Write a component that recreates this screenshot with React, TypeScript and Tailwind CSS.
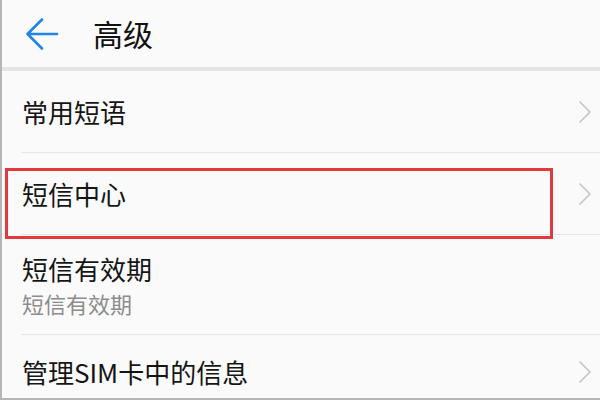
const font = { fontFamily: '"Noto Sans CJK SC", "Noto Sans", sans-serif' };

function Chevron() {
  return (
    <svg width="14" height="24" viewBox="0 0 14 24" fill="none" className="shrink-0">
      <path d="M2 2 L12 12 L2 22" stroke="#c4c4c4" strokeWidth="1.6" strokeLinecap="round" strokeLinejoin="round" />
    </svg>
  );
}

function BackArrow() {
  return (
    <svg width="34" height="34" viewBox="0 0 34 34" fill="none">
      <path d="M32 17 H3 M17 2.5 L2.5 17 L17 31.5" stroke="#1f86e6" strokeWidth="2.6" strokeLinecap="round" strokeLinejoin="round" />
    </svg>
  );
}

export default function App() {
  const rows = [
    { title: "常用短语", h: "h-[82px]", arrow: true },
    { title: "短信中心", h: "h-[82px]", arrow: true },
    { title: "短信有效期", sub: "短信有效期", h: "h-[100px]", arrow: false },
    { title: "管理SIM卡中的信息", h: "h-[64px]", arrow: true },
  ];

  return (
    <div
      className="relative w-[600px] h-[400px] overflow-hidden bg-[#fafafa] border-l-2 border-b-2 border-[#b5b5b5]"
      style={font}
    >
      {/* Header */}
      <div className="h-[67px] flex items-center pl-[23px]">
        <BackArrow />
        <span className="ml-[34px] text-[30px] leading-none text-[#111] pb-[2px]">高级</span>
      </div>
      <div className="h-[4px] bg-[#e4e4e4]" />

      {/* List */}
      <div className="flex flex-col">
        {rows.map((row, i) => (
          <div
            key={row.title}
            className={`${row.h} ml-[19px] flex items-center justify-between pr-[8px] ${
              i < rows.length - 1 ? "border-b border-[#e6e6e6]" : ""
            } ${i === rows.length - 1 ? "pt-[10px]" : ""}`}
          >
            <div className="flex flex-col pl-[1px]">
              <span className="text-[26px] leading-[34px] text-[#151515]">{row.title}</span>
              {row.sub && (
                <span className="text-[22px] leading-[30px] text-[#8c8c8c] mt-[2px]">{row.sub}</span>
              )}
            </div>
            {row.arrow && <Chevron />}
          </div>
        ))}
      </div>

      {/* Highlight annotation */}
      <div className="absolute left-[3px] top-[168px] w-[548px] h-[71px] border-[3px] border-[#e0393e]" />
    </div>
  );
}
